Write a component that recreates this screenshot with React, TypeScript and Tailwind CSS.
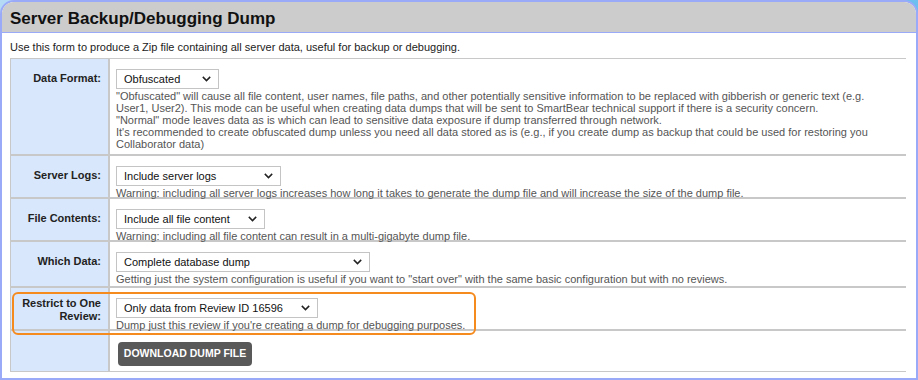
import React from "react";

const ChevronDown = () => (
  <svg width="9" height="6" viewBox="0 0 9 6" className="shrink-0">
    <path d="M0.8 0.9 L4.5 4.6 L8.2 0.9" fill="none" stroke="#222" strokeWidth="1.5" />
  </svg>
);

const FakeSelect = ({ value, width }: { value: string; width: string }) => (
  <div
    className={`${width} h-[20px] flex items-center justify-between pl-[7px] pr-[7px] bg-white border border-[#c4c4c4] text-[11px] text-[#111]`}
  >
    <span>{value}</span>
    <ChevronDown />
  </div>
);

const rows = [
  {
    label: "Data Format:",
    value: "Obfuscated",
    width: "w-[103px]",
    height: "h-[97px]",
    desc: [
      '"Obfuscated" will cause all file content, user names, file paths, and other potentially sensitive information to be replaced with gibberish or generic text (e.g.',
      "User1, User2). This mode can be useful when creating data dumps that will be sent to SmartBear technical support if there is a security concern.",
      '"Normal" mode leaves data as is which can lead to sensitive data exposure if dump transferred through network.',
      "It's recommended to create obfuscated dump unless you need all data stored as is (e.g., if you create dump as backup that could be used for restoring you",
      "Collaborator data)",
    ],
  },
  {
    label: "Server Logs:",
    value: "Include server logs",
    width: "w-[165px]",
    height: "h-[43px]",
    desc: [
      "Warning: including all server logs increases how long it takes to generate the dump file and will increase the size of the dump file.",
    ],
  },
  {
    label: "File Contents:",
    value: "Include all file content",
    width: "w-[149px]",
    height: "h-[43px]",
    desc: ["Warning: including all file content can result in a multi-gigabyte dump file."],
  },
  {
    label: "Which Data:",
    value: "Complete database dump",
    width: "w-[254px]",
    height: "h-[46px]",
    desc: [
      'Getting just the system configuration is useful if you want to "start over" with the same basic configuration but with no reviews.',
    ],
  },
  {
    label: "Restrict to One Review:",
    value: "Only data from Review ID 16596",
    width: "w-[202px]",
    height: "h-[43px]",
    desc: ["Dump just this review if you're creating a dump for debugging purposes."],
  },
];

export default function App() {
  return (
    <div
      className="w-[918px] h-[380px] overflow-hidden bg-gradient-to-r from-[#b4daf6] to-[#6cbfee]"
      style={{ fontFamily: '"Liberation Sans", Arial, sans-serif' }}
    >
      <div className="h-full flex flex-col border-2 border-[#9aaaf8] rounded-t-[14px] bg-white overflow-hidden">
        <div className="h-[31px] shrink-0 bg-[#cccccc] border-b border-[#9aaaf8] flex items-center pl-[8px]">
          <h1 className="text-[17px] font-bold text-[#111] leading-none pt-[2px]">
            Server Backup/Debugging Dump
          </h1>
        </div>
        <div className="relative flex-1 bg-white pl-[8px] pr-[10px] pt-[8px]">
          <p className="text-[11px] leading-[13px] text-[#222] mb-[4px]">
            Use this form to produce a Zip file containing all server data, useful for backup or debugging.
          </p>
          <div className="border-t border-l border-b border-[#c8c8c8]">
            {rows.map((row, i) => (
              <div key={i} className={`${row.height} flex border-b-2 border-[#c8c8c8]`}>
                <div
                  className={`w-[99px] shrink-0 bg-[#d8e7fb] border-r-2 border-[#c8c8c8] ${
                    i === 4 ? "pt-[9px]" : "pt-[13px]"
                  } pr-[7px] text-right text-[11px] leading-[13px] font-bold text-[#222]`}
                >
                  {i === 4 ? (
                    <>
                      Restrict to One
                      <br />
                      Review:
                    </>
                  ) : (
                    row.label
                  )}
                </div>
                <div className="flex-1 pl-[6px] pt-[10px]">
                  <FakeSelect value={row.value} width={row.width} />
                  <div className="text-[11px] leading-[12px] text-[#555] pt-[1px]">
                    {row.desc.map((d, j) => (
                      <div key={j} className="whitespace-nowrap">
                        {d}
                      </div>
                    ))}
                  </div>
                </div>
              </div>
            ))}
            <div className="h-[40px] flex">
              <div className="w-[99px] shrink-0 bg-[#d8e7fb] border-r-2 border-[#c8c8c8]" />
              <div className="flex-1 pl-[8px] pt-[9px]">
                <button className="h-[24px] w-[134px] bg-[#595959] rounded-[4px] text-white text-[10.5px] font-bold">
                  DOWNLOAD DUMP FILE
                </button>
              </div>
            </div>
          </div>
          {/* highlight round the review row */}
          <div className="absolute left-[10px] top-[259px] w-[464px] h-[43px] border-2 border-[#f58a1f] rounded-[6px] pointer-events-none" />
        </div>
      </div>
    </div>
  );
}
